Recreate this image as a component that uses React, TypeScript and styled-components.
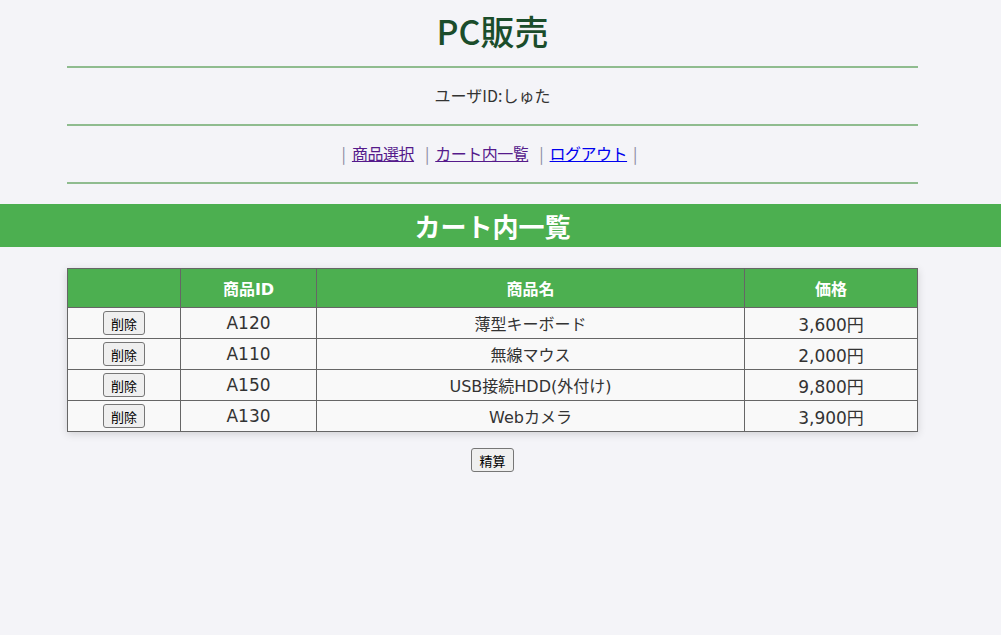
import React from "react";
import styled, { createGlobalStyle } from "styled-components";

const GlobalStyle = createGlobalStyle`
  html, body {
    margin: 0;
    padding: 0;
    background: #f4f4f8;
  }
  body {
    font-family: "DejaVu Sans", "Noto Sans CJK JP", sans-serif;
    color: #333;
    font-size: 16px;
  }
`;

const Page = styled.div`
  padding-right: 16px;
  display: flex;
  flex-direction: column;
  align-items: center;
`;

const Title = styled.h1`
  margin: 9px 0 14px;
  font-size: 34px;
  line-height: 43px;
  font-weight: 500;
  color: #1b4d2b;
  font-family: "Noto Sans CJK JP", sans-serif;
`;

const Rule = styled.hr`
  width: 851px;
  height: 2px;
  margin: 0;
  border: none;
  background: #8fbc8f;
`;

const InfoRow = styled.div`
  height: 56px;
  display: flex;
  align-items: center;
  justify-content: center;
  font-family: "Noto Sans CJK JP", sans-serif;
  font-size: 16px;
  color: #333;
  padding-bottom: 2px;
  box-sizing: border-box;
`;

const Nav = styled.nav`
  height: 56px;
  display: flex;
  align-items: center;
  justify-content: center;
  font-family: "Noto Sans CJK JP", sans-serif;
  font-size: 16px;
  padding-bottom: 2px;
  box-sizing: border-box;
`;

const Sep = styled.span`
  color: #8a8aa0;
  margin-right: 6px;
`;

const NavLink = styled.a<{ $visited?: boolean }>`
  color: ${(p) => (p.$visited ? "#551a8b" : "#0000ee")};
  text-decoration: underline;
  cursor: pointer;
  margin-right: 11px;
  letter-spacing: -0.5px;

  &:last-of-type {
    margin-right: 6px;
  }
`;

const Band = styled.div`
  align-self: stretch;
  margin: 20px -16px 0 0;
  height: 43px;
  background: #4caf50;
  display: flex;
  align-items: center;
  justify-content: center;
  padding-right: 16px;
`;

const BandTitle = styled.h2`
  margin: 0;
  color: #fff;
  font-size: 26px;
  font-weight: 700;
  font-family: "Noto Sans CJK JP", sans-serif;
`;

const Table = styled.table`
  margin-top: 21px;
  width: 851px;
  border-collapse: collapse;
  box-shadow: 0 2px 8px rgba(0, 0, 0, 0.15);
`;

const Th = styled.th<{ $w?: number }>`
  width: ${(p) => (p.$w ? `${p.$w}px` : "auto")};
  height: 38px;
  padding: 0;
  background: #4caf50;
  color: #fff;
  font-size: 16px;
  font-weight: 700;
  border: 1px solid #666;
  text-align: center;
`;

const Td = styled.td<{ $large?: boolean }>`
  height: 30px;
  padding: 0;
  background: #f9f9f9;
  border: 1px solid #666;
  text-align: center;
  font-size: ${(p) => (p.$large ? "17px" : "16px")};
  color: #333;
`;

const SmallButton = styled.button`
  font-family: "Noto Sans CJK JP", sans-serif;
  font-size: 13px;
  color: #000;
  height: 24px;
  padding: 0 7px;
  background: #efefef;
  border: 1px solid #767676;
  border-radius: 3px;
  cursor: pointer;
  line-height: 1;
`;

const Footer = styled.div`
  margin-top: 16px;
`;

const items = [
  { id: "A120", name: "薄型キーボード", price: "3,600円" },
  { id: "A110", name: "無線マウス", price: "2,000円" },
  { id: "A150", name: "USB接続HDD(外付け)", price: "9,800円" },
  { id: "A130", name: "Webカメラ", price: "3,900円" },
];

export default function App() {
  return (
    <>
      <GlobalStyle />
      <Page>
        <Title>PC販売</Title>
        <Rule />
        <InfoRow>ユーザID:しゅた</InfoRow>
        <Rule />
        <Nav>
          <Sep>|</Sep>
          <NavLink $visited>商品選択</NavLink>
          <Sep>|</Sep>
          <NavLink $visited>カート内一覧</NavLink>
          <Sep>|</Sep>
          <NavLink>ログアウト</NavLink>
          <Sep>|</Sep>
        </Nav>
        <Rule />
        <Band>
          <BandTitle>カート内一覧</BandTitle>
        </Band>
        <Table>
          <thead>
            <tr>
              <Th $w={112}></Th>
              <Th $w={135}>商品ID</Th>
              <Th $w={427}>商品名</Th>
              <Th>価格</Th>
            </tr>
          </thead>
          <tbody>
            {items.map((it) => (
              <tr key={it.id}>
                <Td>
                  <SmallButton>削除</SmallButton>
                </Td>
                <Td $large>{it.id}</Td>
                <Td>{it.name}</Td>
                <Td $large>{it.price}</Td>
              </tr>
            ))}
          </tbody>
        </Table>
        <Footer>
          <SmallButton>精算</SmallButton>
        </Footer>
      </Page>
    </>
  );
}
